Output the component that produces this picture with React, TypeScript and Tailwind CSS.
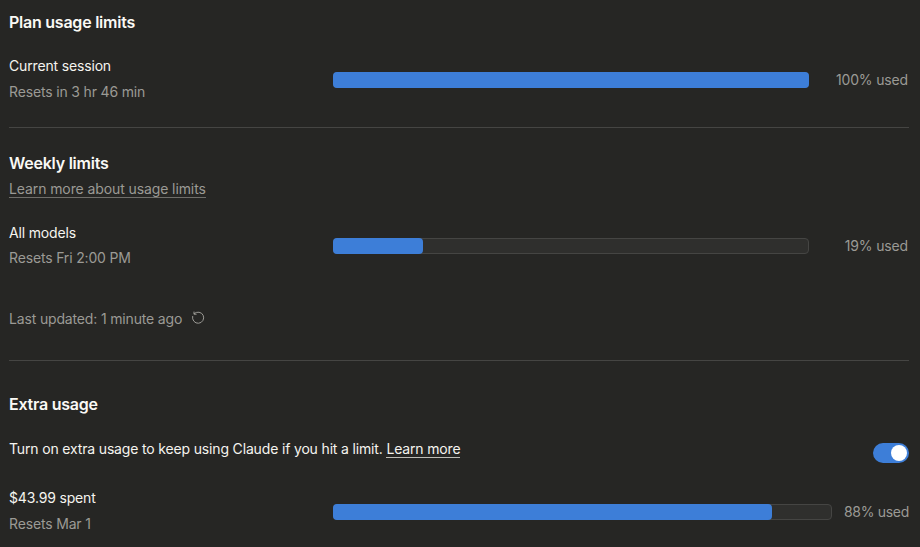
import React from "react";

function Bar({ pct, className = "" }: { pct: number; className?: string }) {
  return (
    <div className={`h-4 flex-1 rounded-[4px] border border-[#454543] bg-[#2f2f2d] ${className}`}>
      <div className="-m-px h-4 rounded-[4px] bg-[#3d7ed8]" style={{ width: `calc(${pct}% + ${(2 * pct) / 100}px)` }} />
    </div>
  );
}

function Row({ title, sub, pct, label, labelClass, subClass, barClass, className }: { title: string; sub: string; pct: number; label: string; labelClass: string; subClass: string; barClass?: string; className: string }) {
  return (
    <div className={`flex items-center ${className}`}>
      <div className="w-[324px] shrink-0">
        <div className="h-[25px] text-[14px] leading-[25px] text-[#f5f4ef]">{title}</div>
        <div className={`text-[14px] text-[#9b9a95] ${subClass}`}>{sub}</div>
      </div>
      <Bar pct={pct} className={barClass} />
      <div className={`ml-3 whitespace-nowrap text-right text-[14px] text-[#9b9a95] ${labelClass}`}>{label}</div>
    </div>
  );
}

export default function App() {
  return (
    <div className="h-[547px] w-[920px] overflow-hidden bg-[#262624] pl-[9px] pr-[11px] font-['Inter',sans-serif] tracking-[-0.16px]">
      <h2 className="pt-[10px] text-[16px] leading-6 font-semibold tracking-[-0.24px] text-[#faf9f5]">Plan usage limits</h2>
      <Row className="mt-[19px]" title="Current session" sub="Resets in 3 hr 46 min" pct={100} label="100% used" labelClass="w-[88px] pr-px" subClass="h-[27px] leading-[27px]" barClass="mt-[2px]" />
      <div className="mt-[22px] h-px bg-[#454543]" />
      <h2 className="mt-[23px] text-[16px] leading-6 font-semibold tracking-[-0.24px] text-[#faf9f5]">Weekly limits</h2>
      <div className="mt-px h-[24px]">
        <span className="inline-block h-[19px] border-b border-[#6f6e6a] text-[14px] leading-[20px] tracking-[-0.1px] text-[#9b9a95]">Learn more about usage limits</span>
      </div>
      <Row className="mt-[20px]" title="All models" sub="Resets Fri 2:00 PM" pct={19} label="19% used" labelClass="w-[88px] pr-px" subClass="h-[26px] leading-[26px]" />
      <div className="mt-[35px] flex h-6 items-center text-[14px] text-[#9b9a95]">
        <span>Last updated: 1 minute ago</span>
        <svg className="ml-[9px]" width="14" height="14" viewBox="0 0 14 14" fill="none" stroke="#9b9a95" strokeWidth="1" strokeLinecap="round">
          <path d="M3.2 2.6A5.6 5.6 0 1 1 1.6 5.4" />
          <path d="M3 1v2.2h2.2" />
        </svg>
      </div>
      <div className="mt-[30px] h-px bg-[#454543]" />
      <h2 className="mt-[31px] text-[16px] leading-6 font-semibold tracking-[-0.24px] text-[#faf9f5]">Extra usage</h2>
      <div className="mt-[20px] flex h-6 items-center justify-between">
        <p className="text-[14px] text-[#f5f4ef]">
          Turn on extra usage to keep using Claude if you hit a limit.{" "}
          <span className="border-b border-[#bdbcb6]">Learn more</span>
        </p>
        <div className="mt-[10px] flex h-5 w-9 items-center justify-end rounded-full bg-[#3d7ed8] pr-[2px]">
          <div className="h-4 w-4 rounded-full bg-white" />
        </div>
      </div>
      <Row className="mt-[25px]" title="$43.99 spent" sub="Resets Mar 1" pct={88} label="88% used" labelClass="w-[65px] tracking-[-0.3px]" subClass="h-[27px] leading-[27px]" barClass="mt-[2px]" />
    </div>
  );
}
